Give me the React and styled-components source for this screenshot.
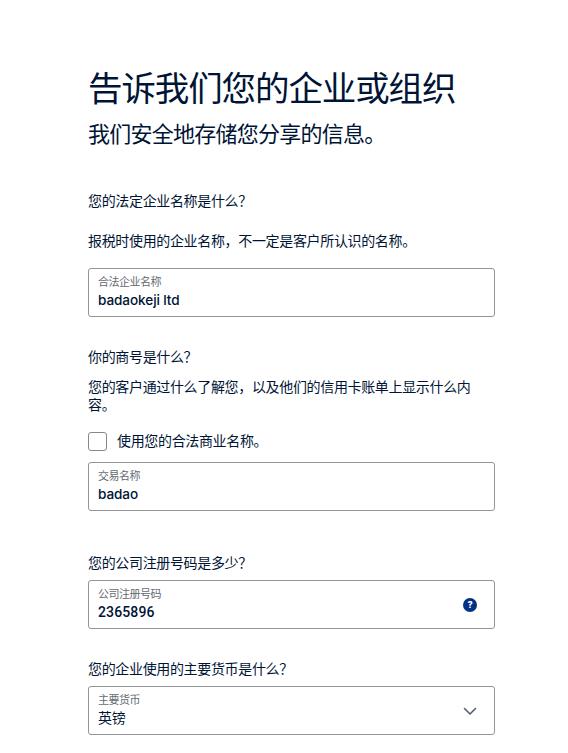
import React from "react";
import styled, { createGlobalStyle } from "styled-components";

const Global = createGlobalStyle`
  * { box-sizing: border-box; }
  body { margin: 0; background: #fff; overflow: hidden; }
`;
const Page = styled.main`
  width: 568px; height: 753px; padding: 67px 73px 0 88px; overflow: hidden;
  color: #001435; font-family: Inter, "Noto Sans CJK SC", sans-serif;
  font-size: 14px; line-height: 18px; letter-spacing: -0.34px;
`;
const Title = styled.h1`
  margin: 0; font-size: 34.5px; line-height: 44px; font-weight: 400;
  letter-spacing: -1.1px; white-space: nowrap;
`;
const Subtitle = styled.p`
  margin: 9px 0 0; font-size: 22px; line-height: 28px; letter-spacing: -0.75px; white-space: nowrap;
`;
const Section = styled.section`
  margin-top: ${(p) => p.$gap}px;
`;
const Question = styled.h2`
  margin: 0; font-size: 14px; line-height: 18px; font-weight: 400;
`;
const Hint = styled.p`
  width: 390px; margin: ${(p) => p.$gap}px 0 0;
`;
const Field = styled.div`
  display: flex; align-items: center; justify-content: space-between;
  width: 407px; height: 49px; margin-top: ${(p) => p.$gap}px; padding: 0 17px 0 9px;
  border: 1px solid #929496; border-radius: 3px;
`;
const FieldText = styled.div`
  display: flex; flex-direction: column;
`;
const Label = styled.span`
  margin-top: -1px; font-size: 11px; line-height: 16px; letter-spacing: -0.5px; color: #656a72;
`;
const Value = styled.span`
  font-size: 13.6px; line-height: 20px; letter-spacing: -0.1px; font-weight: 500;
`;
const NumberValue = styled(Value)`
  font-family: Roboto, sans-serif; font-size: 14px; letter-spacing: 0.12px;
`;
const ChoiceValue = styled(Value)`
  font-size: 14px; letter-spacing: -0.32px; font-weight: 400;
`;
const CheckRow = styled.label`
  display: flex; align-items: center; gap: 10px; height: 20px; margin-top: 17px;
`;
const CheckBox = styled.span`
  width: 19px; height: 19px; border: 1px solid #85888d; border-radius: 3px;
`;
const HelpIcon = styled.span`
  display: flex; align-items: center; justify-content: center;
  width: 14px; height: 14px; border-radius: 50%; background: #003087; color: #fff;
  font-size: 9px; line-height: 14px; font-weight: 800; letter-spacing: 0;
`;
const Chevron = styled.svg`
  display: block; width: 14px; height: 14px; fill: none;
  stroke: #545d70; stroke-width: 1.6; stroke-linecap: round; stroke-linejoin: round;
`;

const Input = ({ label, value, gap, valueAs: ValueText = Value, children }) => (
  <Field $gap={gap}>
    <FieldText>
      <Label>{label}</Label>
      <ValueText>{value}</ValueText>
    </FieldText>
    {children}
  </Field>
);

export default function App() {
  return (
    <Page lang="zh-CN">
      <Global />
      <Title>告诉我们您的企业或组织</Title>
      <Subtitle>我们安全地存储您分享的信息。</Subtitle>
      <Section $gap={44}>
        <Question>您的法定企业名称是什么？</Question>
        <Hint $gap={22}>报税时使用的企业名称，不一定是客户所认识的名称。</Hint>
        <Input gap={18} label="合法企业名称" value="badaokeji ltd" />
      </Section>
      <Section $gap={31}>
        <Question>你的商号是什么？</Question>
        <Hint $gap={12}>您的客户通过什么了解您，以及他们的信用卡账单上显示什么内容。</Hint>
        <CheckRow><CheckBox />使用您的合法商业名称。</CheckRow>
        <Input gap={11} label="交易名称" value="badao" />
      </Section>
      <Section $gap={43}>
        <Question>您的公司注册号码是多少？</Question>
        <Input gap={8} label="公司注册号码" value="2365896" valueAs={NumberValue}>
          <HelpIcon>?</HelpIcon>
        </Input>
      </Section>
      <Section $gap={31}>
        <Question>您的企业使用的主要货币是什么？</Question>
        <Input gap={8} label="主要货币" value="英镑" valueAs={ChoiceValue}>
          <Chevron viewBox="0 0 14 14"><path d="M1.5 4.5 7 10l5.5-5.5" /></Chevron>
        </Input>
      </Section>
    </Page>
  );
}
